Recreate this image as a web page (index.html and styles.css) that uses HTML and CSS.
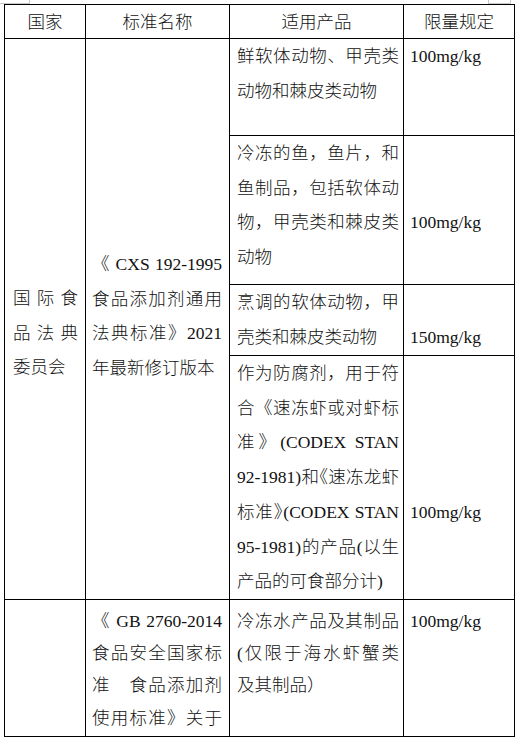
FILE: index.html
```html
<!DOCTYPE html>
<html lang="zh-CN">
<head>
<meta charset="utf-8">
<title>食品添加剂限量规定</title>
<link rel="stylesheet" href="styles.css">
</head>
<body>
<div class="page">
  <span class="handle handle-l"></span>
  <span class="handle handle-r"></span>
  <table class="std">
    <colgroup>
      <col class="c1"><col class="c2"><col class="c3"><col class="c4">
    </colgroup>
    <thead>
      <tr class="r-head">
        <th>国家</th>
        <th>标准名称</th>
        <th>适用产品</th>
        <th>限量规定</th>
      </tr>
    </thead>
    <tbody>
      <tr class="r1">
        <td rowspan="4" class="country off7">国际食品法典委员会</td>
        <td rowspan="4" class="name off6">《 CXS 192-1995食品添加剂通用法典标准》2021年最新修订版本</td>
        <td class="prod">鲜软体动物、甲壳类动物和棘皮类动物</td>
        <td class="lim">100mg/kg</td>
      </tr>
      <tr class="r2">
        <td class="prod">冷冻的鱼，鱼片，和鱼制品，包括软体动物，甲壳类和棘皮类动物</td>
        <td class="lim off2">100mg/kg</td>
      </tr>
      <tr class="r3">
        <td class="prod">烹调的软体动物，甲壳类和棘皮类动物</td>
        <td class="lim off1">150mg/kg</td>
      </tr>
      <tr class="r4">
        <td class="prod">作为防腐剂，用于符合《速冻虾或对虾标准》(CODEX STAN 92-1981)和<span class="trim-l">《</span>速冻龙虾标准<span class="trim-r">》</span>(CODEX STAN 95-1981)的产品(以生产品的可食部分计)</td>
        <td class="lim off4">100mg/kg</td>
      </tr>
      <tr class="r5">
        <td class="country"></td>
        <td class="name cut">《 GB 2760-2014食品安全国家标准　食品添加剂使用标准》关于</td>
        <td class="prod">冷冻水产品及其制品(仅限于海水虾蟹类及其制品）</td>
        <td class="lim">100mg/kg</td>
      </tr>
    </tbody>
  </table>
</div>
</body>
</html>
```

FILE: styles.css
```css
html, body {
  margin: 0;
  padding: 0;
  background: #ffffff;
}

.page {
  position: relative;
  width: 518px;
  height: 738px;
  overflow: hidden;
  padding: 4px 0 0 4px;
  box-sizing: border-box;
  font-family: "Liberation Serif", "Noto Sans CJK SC", serif;
  font-size: 17.5px;
  font-weight: 300;
  color: #111;
  text-spacing-trim: space-all;
}

.handle {
  position: absolute;
  top: 0;
  height: 3px;
  border: 1px solid #c8c8c8;
  border-top: none;
}

.handle-l {
  left: -1px;
  width: 29px;
}

.handle-r {
  left: 488px;
  width: 21px;
}

.std {
  border-collapse: collapse;
  table-layout: fixed;
  width: 510px;
}

.c1 { width: 81px; }
.c2 { width: 144px; }
.c3 { width: 174px; }
.c4 { width: 111px; }

.std th,
.std td {
  border: 1px solid #000;
}

.std th {
  padding: 0;
  font-weight: 300;
  text-align: center;
  vertical-align: middle;
  line-height: 32px;
}

.r-head { height: 34px; }

.std td {
  vertical-align: top;
  text-align: justify;
  line-height: 34.7px;
}

.r1 { height: 97px; }
.r2 { height: 149px; }
.r3 { height: 71px; }
.r4 { height: 242px; }
.r5 { height: 137px; }

.std td.country { padding: 0 7px 0 8px; }
.std td.name { padding: 0 7px 0 6px; }
.std td.prod { padding: 0 4px 0 7px; }
.std td.lim { padding: 0 4px 0 6px; }

.std td.off1 { padding-top: 34.7px; }
.std td.off2 { padding-top: 69.4px; }
.std td.off4 { padding-top: 138.8px; }
.std td.off6 { padding-top: 208px; }
.std td.off7 { padding-top: 242px; }

.std .r5 td {
  line-height: 32.2px;
  padding-top: 5px;
}

.std td.cut { text-align-last: justify; }

.trim-l { margin-left: -0.5em; }
.trim-r { letter-spacing: -0.5em; }
```
